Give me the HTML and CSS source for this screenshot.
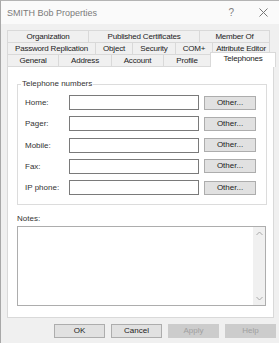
FILE: index.html
```
<!DOCTYPE html>
<html lang="en">
<head>
  <meta charset="UTF-8">
  <title>SMITH Bob Properties</title>
  <link rel="stylesheet" href="styles.css">
</head>
<body>

<div class="window">
  <div class="titlebar">
    <span class="title">SMITH Bob Properties</span>
    <span class="tb-btn help">?</span>
    <span class="tb-btn close">
      <svg width="9" height="9" viewBox="0 0 9 9"><path d="M0.5 0.5 L8.5 8.5 M8.5 0.5 L0.5 8.5" stroke="#777" stroke-width="1" fill="none"/></svg>
    </span>
  </div>

  <div class="content">
    <div class="tabs">
      <div class="tab-row">
        <div class="tab w81">Organization</div>
        <div class="tab w111">Published Certificates</div>
        <div class="tab w71">Member Of</div>
      </div>
      <div class="tab-row">
        <div class="tab w88">Password Replication</div>
        <div class="tab w37">Object</div>
        <div class="tab w43">Security</div>
        <div class="tab w37">COM+</div>
        <div class="tab w58">Attribute Editor</div>
      </div>
      <div class="tab-row">
        <div class="tab w51">General</div>
        <div class="tab w53">Address</div>
        <div class="tab w52">Account</div>
        <div class="tab w47">Profile</div>
        <div class="tab active">Telephones</div>
      </div>
    </div>

    <div class="panel">
      <fieldset class="group">
        <legend>Telephone numbers</legend>
        <div class="phone-rows">
          <div class="phone-row">
            <label>Home:</label>
            <div class="field"></div>
            <button class="btn">Other...</button>
          </div>
          <div class="phone-row">
            <label>Pager:</label>
            <div class="field"></div>
            <button class="btn">Other...</button>
          </div>
          <div class="phone-row">
            <label>Mobile:</label>
            <div class="field"></div>
            <button class="btn">Other...</button>
          </div>
          <div class="phone-row">
            <label>Fax:</label>
            <div class="field"></div>
            <button class="btn">Other...</button>
          </div>
          <div class="phone-row">
            <label>IP phone:</label>
            <div class="field"></div>
            <button class="btn">Other...</button>
          </div>
        </div>
      </fieldset>

      <div class="notes-label">Notes:</div>
      <div class="notes">
        <div class="notes-text"></div>
        <div class="scrollbar">
          <svg width="7" height="5" viewBox="0 0 7 5"><path d="M0.5 4 L3.5 1 L6.5 4" stroke="#a8a8a8" fill="none"/></svg>
          <svg width="7" height="5" viewBox="0 0 7 5"><path d="M0.5 1 L3.5 4 L6.5 1" stroke="#a8a8a8" fill="none"/></svg>
        </div>
      </div>
    </div>

    <div class="actions">
      <button class="btn dlg">OK</button>
      <button class="btn dlg">Cancel</button>
      <button class="btn dlg disabled">Apply</button>
      <button class="btn dlg disabled">Help</button>
    </div>
  </div>
</div>

</body>
</html>
```

FILE: styles.css
```
* { margin: 0; padding: 0; box-sizing: border-box; }

body {
  font-family: 'Liberation Sans', Arial, sans-serif;
  font-size: 8px;
  color: #333;
  background: #f0f0f0;
}

.window {
  width: 279px;
  height: 343px;
  border-top: 1px solid #b4b4b4;
  border-left: 1px solid #a8a8a8;
  background: #f0f0f0;
  overflow: hidden;
}

/* Title bar */
.titlebar {
  height: 23px;
  background: #fafafa;
  display: flex;
  align-items: center;
  padding-left: 6px;
}

.titlebar .title {
  flex: 1;
  font-size: 9px;
  color: #7a7a7a;
}

.tb-btn {
  color: #808080;
  font-size: 10px;
  display: flex;
  align-items: center;
}

.tb-btn.help { margin-right: 25px; }
.tb-btn.close { margin-right: 11px; }

/* Tabs */
.content {
  padding: 6px 0 0 6px;
}

.tabs {
  position: relative;
  z-index: 1;
}

.tab-row {
  display: flex;
  height: 12px;
}

.tab {
  height: 12px;
  line-height: 11px;
  text-align: center;
  background: #f0f0f0;
  border: 1px solid #d9d9d9;
  border-right: none;
  border-bottom: none;
  color: #222;
  white-space: nowrap;
  letter-spacing: -0.2px;
}

.tab-row .tab:last-child { border-right: 1px solid #d9d9d9; }

.w81 { width: 81px; }
.w111 { width: 111px; }
.w71 { width: 71px; }
.w88 { width: 88px; }
.w37 { width: 37px; }
.w43 { width: 43px; }
.w58 { width: 58px; }
.w51 { width: 51px; }
.w53 { width: 53px; }
.w52 { width: 52px; }
.w47 { width: 47px; }

.tab.active {
  width: 66px;
  height: 15px;
  margin-top: -2px;
  background: #fff;
  line-height: 12px;
  border-color: #d9d9d9;
}

/* Panel */
.panel {
  width: 267px;
  height: 252px;
  background: #fff;
  border: 1px solid #d9d9d9;
  padding: 12px 0 0 9px;
}

.group {
  width: 250px;
  border: 1px solid #dcdcdc;
  padding: 0;
}

.group legend {
  margin-left: 3px;
  padding: 0 1px;
  line-height: 10px;
  color: #333;
}

.phone-rows {
  display: flex;
  flex-direction: column;
  gap: 6.25px;
  padding: 6px 0 9px 7px;
}

.phone-row {
  display: flex;
  align-items: center;
  height: 15px;
}

.phone-row label {
  width: 44px;
}

.field {
  width: 130px;
  height: 15px;
  border: 1px solid #7a7a7a;
  background: #fff;
}

.btn {
  font-family: inherit;
  font-size: 8px;
  color: #222;
  background: #e1e1e1;
  border: 1px solid #adadad;
  height: 14px;
  line-height: 12px;
}

.phone-row .btn {
  width: 52px;
  margin-left: 5px;
}

/* Notes */
.notes-label {
  margin-top: 9px;
  line-height: 10px;
}

.notes {
  width: 249px;
  height: 80px;
  margin-top: 2px;
  border: 1px solid #adadad;
  display: flex;
}

.notes-text { flex: 1; }

.scrollbar {
  width: 12px;
  background: #f0f0f0;
  display: flex;
  flex-direction: column;
  justify-content: space-between;
  align-items: center;
  padding: 4px 0 4px;
}

/* Dialog buttons */
.actions {
  display: flex;
  gap: 6px;
  padding: 6px 0 0 47px;
}

.btn.dlg {
  width: 51px;
  height: 14px;
}

.btn.disabled {
  background: #cccccc;
  border-color: #cccccc;
  color: #a0a0a0;
}
```
